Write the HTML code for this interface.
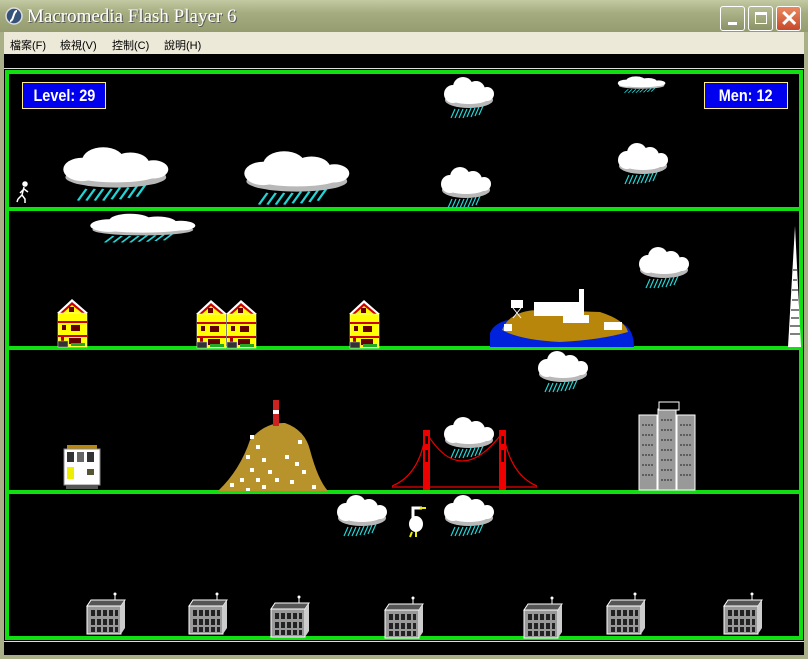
<!DOCTYPE html><html><head><meta charset="utf-8"><style>
*{margin:0;padding:0;box-sizing:border-box}
body{width:808px;height:659px;overflow:hidden;background:#a9b087;position:relative;font-family:"Liberation Sans",sans-serif}
.abs{position:absolute}
#title{left:0;top:0;width:808px;height:32px;background:linear-gradient(#c3c9a2,#a5ad80 40%,#959c70);}
#title .t{left:27px;top:6px;color:#fff;font-family:"Liberation Serif",serif;font-size:19px;text-shadow:1px 1px 0 #555}
.btn{top:6px;width:25px;height:25px;border:1px solid #fff;border-radius:3px;background:linear-gradient(#b6bd93,#8b9266)}
#menu{left:4px;top:32px;width:800px;height:22px;background:#ece9d8;font-family:"Liberation Sans","Noto Sans CJK TC",sans-serif;font-size:11px;color:#000}
#menu span{position:absolute;top:5px}
#stage{left:4px;top:54px;width:800px;height:601px;background:#000}
.g{background:#10e010}
.box{background:#0000ee;border:1px solid #ffee88;color:#fff;font-weight:bold;font-size:17px;text-align:center;line-height:25px;font-family:"Liberation Sans",sans-serif}
.box span{display:inline-block;transform:scaleX(.85)}
</style></head><body>
<div id="title" class="abs">
<svg class="abs" style="left:5px;top:7px" width="18" height="18"><circle cx="9" cy="9" r="8" fill="#35537a" stroke="#ddd" stroke-width="1.5"/><path d="M12 4 C8 4 9 14 5 14" stroke="#fff" stroke-width="2" fill="none"/></svg>
<div class="abs t">Macromedia Flash Player 6</div>
<div class="abs btn" style="left:720px"><div class="abs" style="left:7px;top:15px;width:9px;height:3px;background:#fff"></div></div>
<div class="abs btn" style="left:748px"><div class="abs" style="left:6px;top:5px;width:12px;height:12px;border:1px solid #fff;border-top-width:3px"></div></div>
<div class="abs btn" style="left:776px;background:linear-gradient(#e88a60,#c8482a)"><div class="abs" style="left:3px;top:-1px;color:#fff;font-size:22px;font-weight:bold">✕</div></div>
</div>
<div id="menu" class="abs"><span style="left:6px">檔案(F)</span><span style="left:56px">檢視(V)</span><span style="left:108px">控制(C)</span><span style="left:160px">說明(H)</span></div>
<div id="stage" class="abs"></div>
<div class="abs" style="left:4px;top:68px;width:800px;height:1px;background:#ddd"></div>
<div class="abs" style="left:4px;top:641px;width:800px;height:1px;background:#ddd"></div>
<div class="abs" style="left:5px;top:70px;width:798px;height:570px;border:4px solid #10e010"></div>
<div class="abs g" style="left:9px;top:207px;width:790px;height:4px"></div>
<div class="abs g" style="left:9px;top:346px;width:790px;height:4px"></div>
<div class="abs g" style="left:9px;top:490px;width:790px;height:4px"></div>

<div class="abs box" style="left:22px;top:82px;width:84px;height:27px"><span>Level: 29</span></div>
<div class="abs box" style="left:704px;top:82px;width:84px;height:27px"><span>Men: 12</span></div>

<svg class="abs" style="left:0;top:0" width="808" height="659">
<defs>
<g id="cl">
<g stroke="#22d4d4" stroke-width="1.2">
<path d="M10 42l4-9M14 42l4-9M18 42l4-9M22 42l4-9M26 41l4-9M30 41l4-9M34 40l4-9M38 39l4-9"/></g>
<ellipse cx="28" cy="24" rx="24" ry="8" fill="#b8b8b8"/>
<circle cx="12" cy="18" r="9" fill="#fff"/><circle cx="22" cy="11" r="10" fill="#fff"/><circle cx="35" cy="14" r="9" fill="#fff"/><circle cx="46" cy="18" r="7" fill="#fff"/><ellipse cx="28" cy="21" rx="21" ry="7" fill="#fff"/>
</g>
<g id="bld">
<polygon points="0,6 4,0 38,0 34,6" fill="#555" stroke="#fff"/><rect x="0" y="6" width="34" height="28" fill="#999" stroke="#fff"/><polygon points="34,6 38,0 38,28 34,34" fill="#ccc"/>
<g fill="#222"><rect x="4" y="10" width="4" height="6"/><rect x="10" y="10" width="4" height="6"/><rect x="16" y="10" width="4" height="6"/><rect x="22" y="10" width="4" height="6"/><rect x="28" y="10" width="3" height="6"/>
<rect x="4" y="19" width="4" height="6"/><rect x="10" y="19" width="4" height="6"/><rect x="16" y="19" width="4" height="6"/><rect x="22" y="19" width="4" height="6"/><rect x="28" y="19" width="3" height="6"/>
<rect x="4" y="27" width="4" height="5"/><rect x="10" y="27" width="4" height="5"/><rect x="16" y="27" width="4" height="5"/><rect x="22" y="27" width="4" height="5"/><rect x="28" y="27" width="3" height="5"/></g>
<line x1="28" y1="0" x2="28" y2="-5" stroke="#fff"/><circle cx="28" cy="-6" r="1.5" fill="#fff"/>
</g>
<g id="house">
<polygon points="0,16 15,2 31,16" fill="#fff"/><polygon points="3,16 15,5 28,16" fill="#c00"/><polygon points="6,16 15,8 25,16" fill="#ff0"/>
<rect x="1" y="16" width="29" height="34" fill="#ff0" stroke="#fff" stroke-width=".5"/>
<rect x="1" y="24" width="29" height="2" fill="#c00"/><rect x="1" y="38" width="29" height="2" fill="#c00"/>
<rect x="12" y="10" width="5" height="5" fill="#600"/><rect x="5" y="28" width="4" height="5" fill="#600"/><rect x="14" y="28" width="9" height="6" fill="#600"/><rect x="12" y="41" width="12" height="6" fill="#600"/><rect x="4" y="40" width="3" height="8" fill="#a00"/>
<rect x="1" y="44" width="10" height="6" fill="#333" stroke="#ccc" stroke-width=".5"/><rect x="14" y="46" width="14" height="3" fill="#2a2"/>
</g>
</defs>
<use href="#cl" transform="translate(441,76) scale(1,1)"/>
<use href="#cl" transform="translate(615,76) scale(.95,.4)"/>
<use href="#cl" transform="translate(57,146) scale(2.1,1.3)"/>
<use href="#cl" transform="translate(238,150) scale(2.1,1.3)"/>
<use href="#cl" transform="translate(438,166)"/>
<use href="#cl" transform="translate(615,142)"/>
<use href="#cl" transform="translate(84,213) scale(2.1,.7)"/>
<use href="#cl" transform="translate(636,246)"/>
<use href="#cl" transform="translate(535,350)"/>
<use href="#cl" transform="translate(441,416)"/>
<use href="#cl" transform="translate(334,494)"/>
<use href="#cl" transform="translate(441,494)"/>
<g stroke="#fff" stroke-width="1.5" fill="none"><circle cx="25" cy="184" r="2" fill="#fff"/><path d="M24 187l-2 8-4 4M22 195l3 4 0 4M24 189l-4 4M24 189l4 3M18 199l-1 3"/></g>
<use href="#house" transform="translate(57,297)"/>
<use href="#house" transform="translate(196,298)"/>
<use href="#house" transform="translate(226,298)"/>
<use href="#house" transform="translate(349,298)"/>
<path d="M490 347 L490 333 Q495 320 520 318 L620 322 Q634 328 634 347Z" fill="#0022dd"/>
<path d="M502 330 Q510 310 540 310 L600 312 Q625 320 628 332 Q600 340 560 342 Q520 340 502 330Z" fill="#b8860b"/>
<rect x="534" y="302" width="50" height="14" fill="#fff"/><rect x="579" y="289" width="5" height="26" fill="#fff"/><rect x="563" y="315" width="26" height="8" fill="#fff"/>
<rect x="511" y="300" width="12" height="8" fill="#fff"/><path d="M513 308l8 10M521 308l-8 10" stroke="#fff"/>
<rect x="604" y="322" width="18" height="8" fill="#fff"/><rect x="504" y="324" width="8" height="7" fill="#fff"/>
<polygon points="795,226 788,347 801,347" fill="#fff"/>
<g stroke="#000" stroke-width="1"><path d="M793 270h4M793 280h4M792 290h6M792 300h6M791 310h8M791 318h8M790 326h10M790 334h10"/></g>
<rect x="67" y="445" width="30" height="4" fill="#b8860b"/><rect x="64" y="449" width="36" height="36" fill="#fff" stroke="#888"/>
<rect x="67" y="452" width="7" height="10" fill="#333"/><rect x="77" y="452" width="7" height="10" fill="#666"/><rect x="87" y="452" width="7" height="10" fill="#333"/>
<rect x="67" y="467" width="7" height="12" fill="#ee0"/><rect x="87" y="469" width="7" height="6" fill="#553"/><rect x="66" y="485" width="32" height="4" fill="#555"/>
<path d="M218 491 Q240 470 250 440 Q265 422 285 423 Q305 430 310 450 Q318 480 328 491Z" fill="#b8922a"/>
<g fill="#fff"><rect x="250" y="435" width="4" height="4"/><rect x="256" y="445" width="4" height="4"/><rect x="246" y="455" width="4" height="4"/><rect x="262" y="458" width="4" height="4"/><rect x="250" y="468" width="4" height="4"/><rect x="240" y="478" width="4" height="4"/><rect x="256" y="478" width="4" height="4"/><rect x="268" y="470" width="4" height="4"/><rect x="285" y="455" width="4" height="4"/><rect x="295" y="462" width="4" height="4"/><rect x="302" y="470" width="4" height="4"/><rect x="230" y="483" width="4" height="4"/><rect x="262" y="485" width="4" height="4"/><rect x="290" y="480" width="4" height="4"/><rect x="312" y="485" width="4" height="4"/><rect x="298" y="440" width="4" height="4"/><rect x="275" y="478" width="4" height="4"/><rect x="246" y="488" width="4" height="3"/></g>
<rect x="273" y="400" width="6" height="26" fill="#c22"/><rect x="273" y="410" width="6" height="4" fill="#fff"/>
<g stroke="#e00" fill="none" stroke-width="1.2"><path d="M392 486 Q420 475 426 432 Q460 490 503 432 Q510 475 537 486"/><path d="M392 487h145"/></g>
<rect x="423" y="430" width="7" height="60" fill="#e00"/><rect x="499" y="430" width="7" height="60" fill="#e00"/>
<g fill="#000"><rect x="425" y="436" width="3" height="8"/><rect x="425" y="450" width="3" height="12"/><rect x="501" y="436" width="3" height="8"/><rect x="501" y="450" width="3" height="12"/></g>
<g stroke="#fff" fill="#999"><rect x="639" y="415" width="18" height="75"/><rect x="677" y="415" width="18" height="75"/><rect x="658" y="409" width="18" height="81"/><rect x="659" y="402" width="20" height="8" fill="#000"/></g>
<g stroke="#222" stroke-width="1" stroke-dasharray="2 1"><path d="M642 425h12M642 435h12M642 445h12M642 455h12M642 465h12M642 475h12M661 420h12M661 430h12M661 440h12M661 450h12M661 460h12M661 470h12M661 480h12M680 425h12M680 435h12M680 445h12M680 455h12M680 465h12M680 475h12"/></g>
<ellipse cx="416" cy="524" rx="7" ry="8" fill="#fff"/><path d="M413 520 L413 508 L422 508" stroke="#fff" stroke-width="3" fill="none"/><path d="M420 508h6" stroke="#ee0" stroke-width="2"/><path d="M412 532l-2 5M416 532l0 5" stroke="#ee0" stroke-width="2"/>
<use href="#bld" transform="translate(87,600)"/>
<use href="#bld" transform="translate(189,600)"/>
<use href="#bld" transform="translate(271,603)"/>
<use href="#bld" transform="translate(385,604)"/>
<use href="#bld" transform="translate(524,604)"/>
<use href="#bld" transform="translate(607,600)"/>
<use href="#bld" transform="translate(724,600)"/>
</svg>
</body></html>
